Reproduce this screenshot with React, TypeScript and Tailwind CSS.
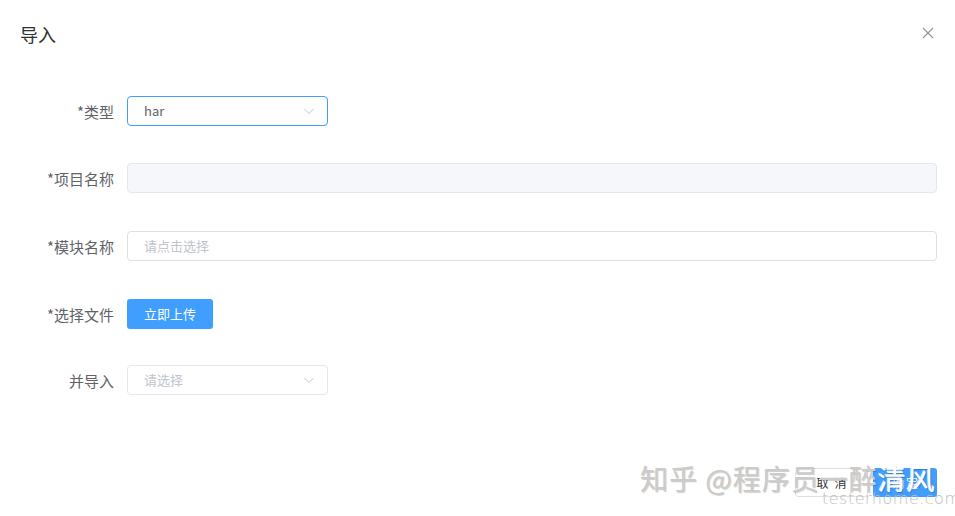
import React from "react";

const font = { fontFamily: '"Noto Sans CJK SC", "Noto Sans", sans-serif' };

function Chevron() {
  return (
    <svg width="12" height="12" viewBox="0 0 12 12" fill="none" className="text-[#c0c4cc]">
      <path d="M1.5 4 L6 8.5 L10.5 4" stroke="currentColor" strokeWidth="1" />
    </svg>
  );
}

function Row({ label, children }: { label: string; children: React.ReactNode }) {
  return (
    <div className="flex items-center h-[30px]">
      <div className="w-[114px] shrink-0 text-right text-[15px] text-[#606266] leading-none">{label}</div>
      <div className="ml-[13px] flex-1 flex items-center">{children}</div>
    </div>
  );
}

export default function App() {
  return (
    <div className="relative w-[955px] h-[516px] bg-white overflow-hidden" style={font}>
      <div className="flex items-center justify-between pl-[20px] pr-[20px] pt-[22px]">
        <div className="text-[18px] text-[#303133] leading-[24px]">导入</div>
        <svg width="12" height="12" viewBox="0 0 12 12" className="mr-[1px] mt-[-2px]">
          <path d="M1 1 L11 11 M11 1 L1 11" stroke="#909399" strokeWidth="1.1" />
        </svg>
      </div>

      <div className="flex flex-col gap-[37px] mt-[50px] pr-[18px]">
        <Row label="*类型">
          <div className="w-[201px] h-[30px] border border-[#409eff] rounded-[4px] flex items-center justify-between pl-[16px] pr-[12px]">
            <span className="text-[13px] text-[#606266]">har</span>
            <Chevron />
          </div>
        </Row>
        <Row label="*项目名称">
          <div className="w-full h-[30px] border border-[#e4e7ed] bg-[#f5f7fa] rounded-[4px]" />
        </Row>
        <div className="mt-[1px]">
          <Row label="*模块名称">
            <div className="w-full h-[30px] border border-[#dcdfe6] rounded-[4px] flex items-center pl-[16px]">
              <span className="text-[13px] text-[#c0c4cc]">请点击选择</span>
            </div>
          </Row>
        </div>
        <div className="mt-[1px]">
          <Row label="*选择文件">
            <div className="w-[86px] h-[30px] bg-[#409eff] rounded-[3px] flex items-center justify-center text-white text-[13px]">
              立即上传
            </div>
          </Row>
        </div>
        <div className="-mt-[1px]">
          <Row label="并导入">
            <div className="w-[201px] h-[30px] border border-[#e4e7ed] rounded-[4px] flex items-center justify-between pl-[16px] pr-[12px]">
              <span className="text-[13px] text-[#c0c4cc]">请选择</span>
              <Chevron />
            </div>
          </Row>
        </div>
      </div>

      <div className="absolute right-[18px] top-[468px] flex gap-[5px]">
        <div className="w-[73px] h-[29px] border border-[#dcdfe6] rounded-[3px] flex items-center justify-center text-[12px] text-[#303133] tracking-[6px] pl-[6px]">
          取消
        </div>
        <div className="w-[64px] h-[29px] bg-[#409eff] rounded-[3px] flex items-center justify-center text-[12px] text-white tracking-[2px] pl-[2px]">
          确定
        </div>
      </div>

      <div
        className="absolute left-[640px] top-[461px] text-[28px] leading-[34px] text-[#cbcbcb] whitespace-nowrap pointer-events-none tracking-[1px]"
        style={{ textShadow: "1px 1px 1px rgba(0,0,0,0.2), -1px -1px 0 rgba(255,255,255,0.8)" }}
      >
        知乎 @程序员一醉<span className="text-white">清风</span>
      </div>
      <div
        className="absolute left-[822px] top-[490px] text-[16px] leading-[18px] text-[#bdbdbd] whitespace-nowrap pointer-events-none tracking-[0.5px]"
        style={{ fontFamily: '"DejaVu Sans", sans-serif', fontWeight: 200 }}
      >
        testerhome.com
      </div>
    </div>
  );
}
